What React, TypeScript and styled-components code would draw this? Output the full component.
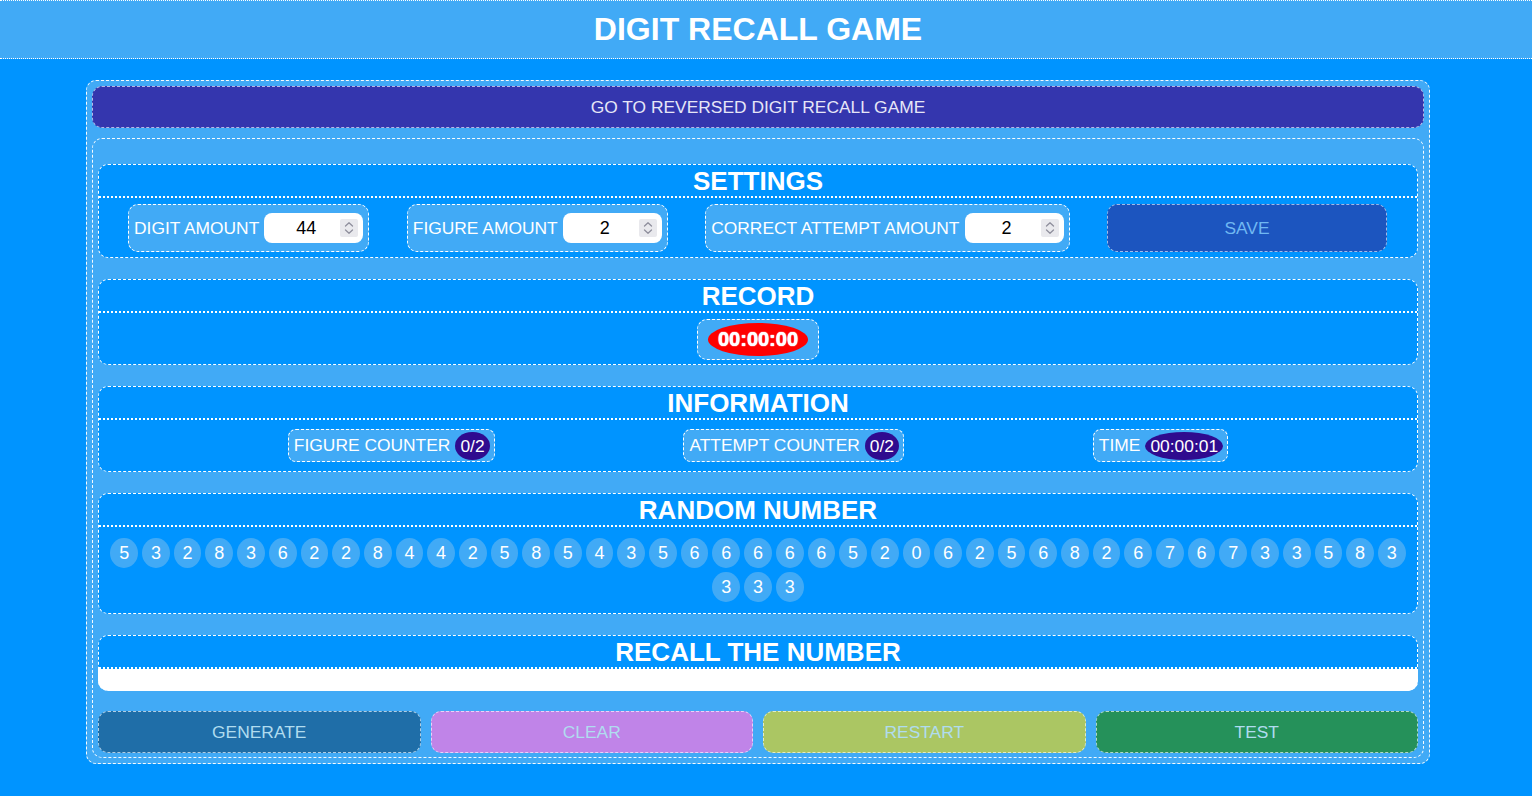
import React from "react";
import styled, { createGlobalStyle } from "styled-components";

const GlobalStyle = createGlobalStyle`
  html, body { margin: 0; padding: 0; background: #0094ff; }
  body { font-family: "Liberation Sans", Arial, sans-serif; }
  *, *::before, *::after { box-sizing: border-box; }
  input[type=number]::-webkit-inner-spin-button,
  input[type=number]::-webkit-outer-spin-button { -webkit-appearance: none; margin: 0; }
`;

const LIGHT = "#41aaf6";
const MAIN = "#0094ff";

const Page = styled.div`
  min-height: 100vh;
  background: ${MAIN};
`;

const Header = styled.header`
  height: 59px;
  background: ${LIGHT};
  border-top: 1px dotted #fff;
  border-bottom: 1px dotted #fff;
  display: flex;
  align-items: center;
  justify-content: center;
  padding: 0 16px 2px 0;
`;

const Title = styled.h1`
  margin: 0;
  color: #fff;
  font-size: 32px;
  font-weight: 700;
  line-height: 36px;
`;

const Main = styled.main`
  padding: 21px 16px 0 0;
`;

const Outer = styled.div`
  width: 1344px;
  margin: 0 auto;
  background: ${LIGHT};
  border: 1px dashed rgba(255, 255, 255, 0.95);
  border-radius: 10px;
  padding: 5px;
  display: flex;
  flex-direction: column;
  gap: 10px;
`;

const TopButton = styled.button`
  height: 42px;
  width: 100%;
  background: #3436ae;
  color: #e6e6f7;
  border: 1px dashed rgba(255, 255, 255, 0.65);
  border-radius: 10px;
  font-family: inherit;
  font-size: 17.4px;
  cursor: pointer;
`;

const Inner = styled.div`
  border: 1px dashed rgba(255, 255, 255, 0.95);
  border-radius: 10px;
  padding: 25px 5px 4px;
  display: flex;
  flex-direction: column;
  gap: 21px;
`;

const Section = styled.section`
  background: ${MAIN};
  border: 1px dashed #fff;
  border-radius: 10px;
`;

const SectionTitle = styled.h2`
  margin: 0;
  height: 33px;
  line-height: 32px;
  text-align: center;
  color: #fff;
  font-size: 26px;
  font-weight: 700;
  border-bottom: 2px dotted #fff;
`;

const SettingsRow = styled.div`
  display: flex;
  justify-content: space-between;
  align-items: center;
  padding: 6px 30px 5px 29px;
`;

const Pill = styled.div`
  display: flex;
  align-items: center;
  background: ${LIGHT};
  border: 1px dashed #fff;
  border-radius: 10px;
  color: #fff;
  font-size: 17.4px;
  white-space: nowrap;
`;

const SettingItem = styled(Pill)`
  height: 48px;
  gap: 5px;
  padding: 0 5px;
`;

const NumberBox = styled.div`
  width: 99px;
  height: 30px;
  background: #fff;
  border-radius: 8px;
  display: flex;
  align-items: center;
  padding: 0 5px 0 8px;
`;

const NumberInput = styled.input`
  flex: 1;
  min-width: 0;
  border: none;
  outline: none;
  background: transparent;
  text-align: center;
  font-family: inherit;
  font-size: 18px;
  color: #000;
  -moz-appearance: textfield;
`;

const Spinner = styled.span`
  width: 18px;
  height: 18px;
  background: #e9e9ed;
  border-radius: 2px;
  display: flex;
  align-items: center;
  justify-content: center;
`;

const SaveButton = styled.button`
  width: 280px;
  height: 48px;
  background: #1c55bf;
  color: #70b8f2;
  border: 1px dashed rgba(255, 255, 255, 0.6);
  border-radius: 10px;
  font-family: inherit;
  font-size: 17.4px;
`;

const CenterRow = styled.div`
  display: flex;
  justify-content: center;
  padding: 6px 0 4px;
`;

const RecordBox = styled(Pill)`
  padding: 3px 10px;
`;

const RecordBadge = styled.span`
  background: #ff0000;
  border-radius: 50%;
  height: 33px;
  line-height: 33px;
  padding: 0 10px;
  color: #fff;
  font-size: 20px;
  font-weight: 700;
  text-shadow: 0 0 1px #fff, 0 0 1px #fff;
`;

const InfoRow = styled.div`
  display: flex;
  justify-content: space-evenly;
  align-items: center;
  padding: 9px 0;
`;

const InfoItem = styled(Pill)`
  height: 33px;
  gap: 5px;
  padding: 0 4px 0 5px;
  border-radius: 8px;
`;

const Badge = styled.span`
  background: #2f0b8f;
  border-radius: 50%;
  height: 28px;
  line-height: 28px;
  padding: 0 5px;
  color: #fff;
`;

const DigitGrid = styled.div`
  display: flex;
  flex-wrap: wrap;
  justify-content: center;
  padding: 9px 8px 9px;
`;

const Digit = styled.span`
  width: 27.7px;
  height: 30px;
  margin: 2px;
  border-radius: 50%;
  background: ${LIGHT};
  color: #fff;
  font-size: 18px;
  display: flex;
  align-items: center;
  justify-content: center;
`;

const RecallInput = styled.input`
  display: block;
  width: calc(100% + 2px);
  height: 22px;
  margin: 0 -1px -1px;
  border: none;
  outline: none;
  background: #fff;
  border-radius: 0 0 10px 10px;
  font-family: inherit;
  font-size: 16px;
`;

const ButtonRow = styled.div`
  display: grid;
  grid-template-columns: repeat(4, 1fr);
  gap: 10px;
  margin-top: -1px;
`;

const ActionButton = styled.button<{ $bg: string }>`
  height: 42px;
  background: ${(p) => p.$bg};
  color: #b0dcef;
  border: 1px dashed rgba(255, 255, 255, 0.65);
  border-radius: 10px;
  font-family: inherit;
  font-size: 17.4px;
  cursor: pointer;
`;

const SpinIcon = () => (
  <Spinner>
    <svg width="10" height="14" viewBox="0 0 10 14" fill="none" stroke="#8f8f9d" strokeWidth="1.3" strokeLinecap="round" strokeLinejoin="round">
      <polyline points="1.5,5 5,1.8 8.5,5" />
      <polyline points="1.5,9 5,12.2 8.5,9" />
    </svg>
  </Spinner>
);

const Setting = ({ label, value }: { label: string; value: number }) => (
  <SettingItem>
    <span>{label}</span>
    <NumberBox>
      <NumberInput type="number" defaultValue={value} />
      <SpinIcon />
    </NumberBox>
  </SettingItem>
);

const digits = "53283622844258543566666520625682676733583333".split("");

export default function App() {
  return (
    <Page>
      <GlobalStyle />
      <Header>
        <Title>DIGIT RECALL GAME</Title>
      </Header>
      <Main>
        <Outer>
          <TopButton>GO TO REVERSED DIGIT RECALL GAME</TopButton>
          <Inner>
            <Section>
              <SectionTitle>SETTINGS</SectionTitle>
              <SettingsRow>
                <Setting label="DIGIT AMOUNT" value={44} />
                <Setting label="FIGURE AMOUNT" value={2} />
                <Setting label="CORRECT ATTEMPT AMOUNT" value={2} />
                <SaveButton>SAVE</SaveButton>
              </SettingsRow>
            </Section>
            <Section>
              <SectionTitle>RECORD</SectionTitle>
              <CenterRow>
                <RecordBox>
                  <RecordBadge>00:00:00</RecordBadge>
                </RecordBox>
              </CenterRow>
            </Section>
            <Section>
              <SectionTitle>INFORMATION</SectionTitle>
              <InfoRow>
                <InfoItem>
                  <span>FIGURE COUNTER</span>
                  <Badge>0/2</Badge>
                </InfoItem>
                <InfoItem>
                  <span>ATTEMPT COUNTER</span>
                  <Badge>0/2</Badge>
                </InfoItem>
                <InfoItem>
                  <span>TIME</span>
                  <Badge>00:00:01</Badge>
                </InfoItem>
              </InfoRow>
            </Section>
            <Section>
              <SectionTitle>RANDOM NUMBER</SectionTitle>
              <DigitGrid>
                {digits.map((d, i) => (
                  <Digit key={i}>{d}</Digit>
                ))}
              </DigitGrid>
            </Section>
            <Section>
              <SectionTitle>RECALL THE NUMBER</SectionTitle>
              <RecallInput type="text" />
            </Section>
            <ButtonRow>
              <ActionButton $bg="#1f6ea8">GENERATE</ActionButton>
              <ActionButton $bg="#c084e8">CLEAR</ActionButton>
              <ActionButton $bg="#abc663">RESTART</ActionButton>
              <ActionButton $bg="#25915a">TEST</ActionButton>
            </ButtonRow>
          </Inner>
        </Outer>
      </Main>
    </Page>
  );
}
